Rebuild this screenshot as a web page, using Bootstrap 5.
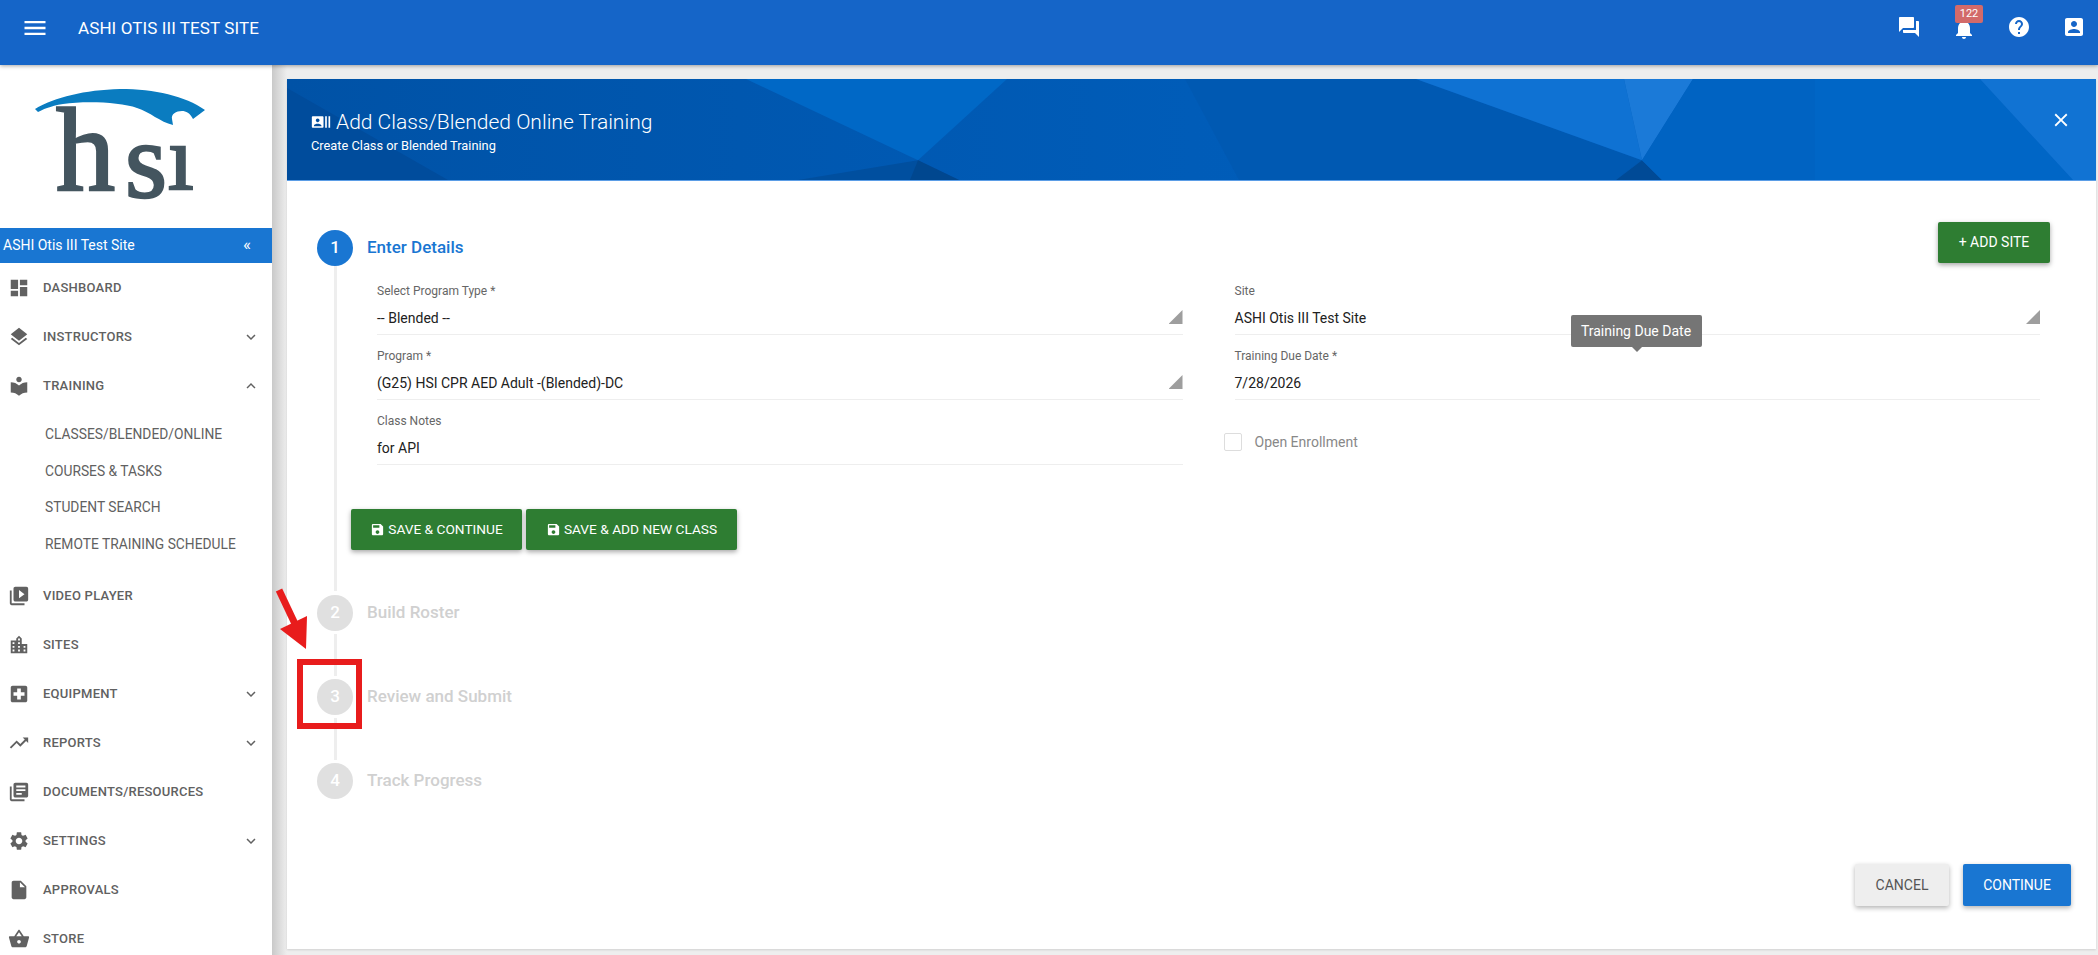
<!DOCTYPE html>
<html lang="en">
<head>
  <meta charset="UTF-8">
  <title>Add Class/Blended Online Training</title>
  <link rel="stylesheet" href="https://cdn.jsdelivr.net/npm/bootstrap@5.3.2/dist/css/bootstrap.min.css">
  <style>
    html, body { height: 955px; overflow: hidden; }
    body { font-family: Roboto, "Liberation Sans", sans-serif; background: #eee; color: #212121; }
    .ico { width: 24px; height: 24px; fill: currentColor; flex: none; }

    /* top bar */
    .top-bar { height: 65px; background: #1565c8; color: #fff; padding: 0 0 0 24px; box-shadow: 0 1px 4px rgba(0,0,0,.35); z-index: 5; position: relative; }
    .top-bar .menu-ico { width: 28px; height: 28px; margin-left: -3px; margin-top: -9px; }
    .top-title { font-size: 17px; letter-spacing: .1px; margin-left: 29px; margin-top: -8px; }
    .top-icons { margin-left: auto; padding-right: 12px; margin-top: -11px; gap: 31px; }
    .bell-wrap { position: relative; display: block; height: 24px; }
    .bell-wrap .ico { margin-top: 2px; }
    .bell-count { position: absolute; left: 3px; top: -10px; width: 28px; height: 18px; background: #d26a6a; border-radius: 2px; font-size: 11px; line-height: 18px; text-align: center; }

    .page-wrap { height: 890px; }

    /* sidebar */
    .side-bar { width: 272px; flex: none; background: #fff; overflow: hidden; position: relative; z-index: 2; }
    .side-logo { height: 163px; display: block; }
    .site-strip { height: 35px; background: #1976d2; color: #fff; font-size: 14px; padding: 0 21px 0 3px; }
    .site-strip .fold-mark { font-size: 17px; line-height: 1; margin-top: -3px; }
    .side-item { height: 49px; padding: 0 12px 0 8px; color: #616161; font-size: 13px; font-weight: 500; letter-spacing: .25px; text-decoration: none; }
    .side-item .ico { width: 22px; height: 22px; margin-right: 13px; }
    .side-item .chev { width: 18px; height: 18px; margin: 0 0 0 auto; }
    .side-sub { padding: 6px 0 9px; }
    .side-sub a { display: block; height: 36.5px; line-height: 36.5px; padding-left: 45px; color: #616161; font-size: 13.8px; text-decoration: none; }

    /* panel */
    .main-area { flex: 1; min-width: 0; padding: 14px 2px 6px 0; background: #eee; position: relative; }
    .main-area::before { content: ""; position: absolute; left: 0; top: 0; bottom: 0; width: 15px; background: linear-gradient(to right, #c9c9c9, #eeeeee); }
    .form-panel { margin-left: 15px; height: 100%; background: #fff; position: relative; box-shadow: 0 1px 2px rgba(0,0,0,.12); }
    .panel-head { height: 102px; position: relative; background: #005ab8; color: #fff; border-bottom: 1px solid #5b9de6; overflow: hidden; flex: none; }
    .head-art { position: absolute; inset: 0; width: 100%; height: 100%; }
    .head-text { position: relative; padding: 31px 0 0 24px; }
    .head-title { font-size: 21px; font-weight: 300; line-height: 24px; }
    .head-title .ico { width: 20px; height: 20px; margin-right: 5px; vertical-align: -3px; }
    .head-sub { font-size: 12.8px; line-height: 16px; margin-top: 4px; }
    .head-close { position: absolute; right: 24px; top: 30px; width: 22px; height: 22px; }

    /* stepper */
    .step-area { padding: 49px 46px 0 30px; position: relative; }
    .step-num { width: 36px; height: 36px; border-radius: 50%; background: #e0e0e0; color: #fff; font-size: 17px; font-weight: 500; flex: none; }
    .step-name { font-size: 17px; font-weight: 500; color: #d0d0d0; margin-left: 14px; }
    .step-head { height: 36px; }
    .step-head.is-active .step-num { background: #1976d2; }
    .step-head.is-active .step-name { color: #1976d2; }
    .add-site { margin: -11px 0 0 auto; width: 112px; height: 41px; }
    .green-btn { background: #2e7d32; color: #fff; font-size: 14px; border: 0; border-radius: 2px; box-shadow: 0 2px 5px rgba(0,0,0,.35); padding: 0; }
    .green-btn:hover { background: #2e7d32; color: #fff; }
    .green-btn .ico { width: 15px; height: 15px; margin-right: 3px; vertical-align: -3px; }
    .step-body { margin-left: 16.5px; border-left: 3px solid #eee; padding: 17px 0 41px 14.5px; }
    .step-line { margin: 3px 0 3px 16.5px; width: 3px; height: 42px; background: #eee; }
    .step-gap { margin-top: 4px; }
    .form-cols { padding: 0 10px 0 26px; }
    .form-cols .row { --bs-gutter-x: 52px; }
    .fld { position: relative; margin-bottom: 13px; }
    .fld-label { font-size: 12px; line-height: 16px; color: #666; margin-bottom: 9px; display: block; }
    .fld-value { font-size: 14px; line-height: 20px; padding-bottom: 6px; border-bottom: 1px solid #eee; color: #212121; position: relative; }
    .fld-value.is-select::after { content: ""; position: absolute; right: 0; top: 2px; width: 14px; height: 14px; background: #9e9e9e; clip-path: polygon(100% 0, 100% 100%, 0 100%); }
    .due-tip { position: absolute; left: 336px; top: -33px; width: 131px; height: 32px; background: #757575; color: #fff; font-size: 14px; line-height: 32px; text-align: center; border-radius: 2px; z-index: 3; }
    .due-tip::after { content: ""; position: absolute; left: 61px; top: 32px; border: 5px solid transparent; border-top-color: #757575; border-bottom: 0; }
    .open-check { margin: 33px 0 0 -11px; height: 18px; }
    .open-check .form-check-input { width: 18px; height: 18px; margin: 0 13px 0 0; border: 1px solid #ddd; border-radius: 2px; }
    .open-check label { font-size: 14px; color: #888; }
    .save-row { margin-top: 31px; gap: 4px; }
    .save-row .green-btn { height: 41px; font-size: 13.7px; }

    .panel-foot { margin-top: auto; padding: 0 25px 43px 0; gap: 14px; }
    .foot-btn { height: 42px; font-size: 14px; border: 0; border-radius: 2px; box-shadow: 0 2px 5px rgba(0,0,0,.3); padding: 0; }
    .foot-cancel { width: 94px; background: #eee; color: #555; }
    .foot-go { width: 108px; background: #1976d2; color: #fff; }

    /* red annotation over the page */
    .mark-overlay { position: absolute; left: 0; top: 0; width: 2098px; height: 955px; pointer-events: none; z-index: 10; }
  </style>
</head>
<body>
<svg width="0" height="0" class="position-absolute">
  <defs>
    <linearGradient id="head-base" x1="0" x2="1" y1="0" y2="0">
      <stop offset="0" stop-color="#0052a6"/>
      <stop offset=".5" stop-color="#005cb8"/>
      <stop offset="1" stop-color="#0062c0"/>
    </linearGradient>
  </defs>
  <symbol id="i-menu" viewBox="0 0 24 24"><path d="M3 18h18v-2H3v2zm0-5h18v-2H3v2zm0-7v2h18V6H3z"/></symbol>
  <symbol id="i-forum" viewBox="0 0 24 24"><path d="M21 6h-2v9H6v2c0 .55.45 1 1 1h11l4 4V7c0-.55-.45-1-1-1zm-4 6V3c0-.55-.45-1-1-1H3c-.55 0-1 .45-1 1v14l4-4h10c.55 0 1-.45 1-1z"/></symbol>
  <symbol id="i-bell" viewBox="0 0 24 24"><path d="M12 22c1.1 0 2-.9 2-2h-4c0 1.1.89 2 2 2zm6-6v-5c0-3.07-1.64-5.64-4.5-6.32V4c0-.83-.67-1.5-1.5-1.5s-1.5.67-1.5 1.5v.68C7.63 5.36 6 7.92 6 11v5l-2 2v1h16v-1l-2-2z"/></symbol>
  <symbol id="i-help" viewBox="0 0 24 24"><path d="M12 2C6.48 2 2 6.48 2 12s4.48 10 10 10 10-4.48 10-10S17.52 2 12 2zm1 17h-2v-2h2v2zm2.07-7.75l-.9.92C13.45 12.9 13 13.5 13 15h-2v-.5c0-1.1.45-2.1 1.17-2.83l1.24-1.26c.37-.36.59-.86.59-1.41 0-1.1-.9-2-2-2s-2 .9-2 2H8c0-2.21 1.79-4 4-4s4 1.79 4 4c0 .88-.36 1.68-.93 2.25z"/></symbol>
  <symbol id="i-account" viewBox="0 0 24 24"><path d="M3 5v14c0 1.1.89 2 2 2h14c1.1 0 2-.9 2-2V5c0-1.1-.9-2-2-2H5c-1.11 0-2 .9-2 2zm12 4c0 1.66-1.34 3-3 3s-3-1.34-3-3 1.34-3 3-3 3 1.34 3 3zm-9 8c0-2 4-3.1 6-3.1s6 1.1 6 3.1v1H6v-1z"/></symbol>
  <symbol id="i-close" viewBox="0 0 24 24"><path d="M19 6.41L17.59 5 12 10.59 6.41 5 5 6.41 10.59 12 5 17.59 6.41 19 12 13.41 17.59 19 19 17.59 13.41 12z"/></symbol>
  <symbol id="i-dash" viewBox="0 0 24 24"><path d="M3 13h8V3H3v10zm0 8h8v-6H3v6zm10 0h8V11h-8v10zm0-18v6h8V3h-8z"/></symbol>
  <symbol id="i-layers" viewBox="0 0 24 24"><path d="M11.99 18.54l-7.37-5.73L3 14.07l9 7 9-7-1.63-1.27-7.38 5.74zM12 16l7.36-5.73L21 9l-9-7-9 7 1.63 1.27L12 16z"/></symbol>
  <symbol id="i-library" viewBox="0 0 24 24"><path d="M12 11.55C9.64 9.35 6.48 8 3 8v11c3.48 0 6.64 1.35 9 3.55 2.36-2.19 5.52-3.55 9-3.55V8c-3.48 0-6.64 1.35-9 3.55zM12 8c1.66 0 3-1.34 3-3s-1.34-3-3-3-3 1.34-3 3 1.34 3 3 3z"/></symbol>
  <symbol id="i-video" viewBox="0 0 24 24"><path d="M4 6H2v14c0 1.1.9 2 2 2h14v-2H4V6zm16-4H8c-1.1 0-2 .9-2 2v12c0 1.1.9 2 2 2h12c1.1 0 2-.9 2-2V4c0-1.1-.9-2-2-2zm-8 12.5v-9l6 4.5-6 4.5z"/></symbol>
  <symbol id="i-city" viewBox="0 0 24 24"><path d="M15 11V5l-3-3-3 3v2H3v14h18V11h-6zm-8 8H5v-2h2v2zm0-4H5v-2h2v2zm0-4H5V9h2v2zm6 8h-2v-2h2v2zm0-4h-2v-2h2v2zm0-4h-2V9h2v2zm0-4h-2V5h2v2zm6 12h-2v-2h2v2zm0-4h-2v-2h2v2z"/></symbol>
  <symbol id="i-hospital" viewBox="0 0 24 24"><path d="M19 3H5c-1.1 0-1.99.9-1.99 2L3 19c0 1.1.9 2 2 2h14c1.1 0 2-.9 2-2V5c0-1.1-.9-2-2-2zm-1 11h-4v4h-4v-4H6v-4h4V6h4v4h4v4z"/></symbol>
  <symbol id="i-trend" viewBox="0 0 24 24"><path d="M16 6l2.29 2.29-4.88 4.88-4-4L2 16.59 3.41 18l6-6 4 4 6.3-6.29L22 12V6z"/></symbol>
  <symbol id="i-books" viewBox="0 0 24 24"><path d="M4 6H2v14c0 1.1.9 2 2 2h14v-2H4V6zm16-4H8c-1.1 0-2 .9-2 2v12c0 1.1.9 2 2 2h12c1.1 0 2-.9 2-2V4c0-1.1-.9-2-2-2zm-1 9H9V9h10v2zm-4 4H9v-2h6v2zm4-8H9V5h10v2z"/></symbol>
  <symbol id="i-gear" viewBox="0 0 24 24"><path d="M19.14 12.94c.04-.3.06-.61.06-.94 0-.32-.02-.64-.07-.94l2.03-1.58c.18-.14.23-.41.12-.61l-1.92-3.32c-.12-.22-.37-.29-.59-.22l-2.39.96c-.5-.38-1.03-.7-1.62-.94l-.36-2.54c-.04-.24-.24-.41-.48-.41h-3.84c-.24 0-.43.17-.47.41l-.36 2.54c-.59.24-1.13.57-1.62.94l-2.39-.96c-.22-.08-.47 0-.59.22L2.74 8.87c-.12.21-.08.47.12.61l2.03 1.58c-.05.3-.09.63-.09.94s.02.64.07.94l-2.03 1.58c-.18.14-.23.41-.12.61l1.92 3.32c.12.22.37.29.59.22l2.39-.96c.5.38 1.03.7 1.62.94l.36 2.54c.05.24.24.41.48.41h3.84c.24 0 .44-.17.47-.41l.36-2.54c.59-.24 1.13-.56 1.62-.94l2.39.96c.22.08.47 0 .59-.22l1.92-3.32c.12-.22.07-.47-.12-.61l-2.01-1.58zM12 15.6c-1.98 0-3.6-1.62-3.6-3.6s1.62-3.6 3.6-3.6 3.6 1.62 3.6 3.6-1.62 3.6-3.6 3.6z"/></symbol>
  <symbol id="i-file" viewBox="0 0 24 24"><path d="M6 2c-1.1 0-1.99.9-1.99 2L4 20c0 1.1.89 2 1.99 2H18c1.1 0 2-.9 2-2V8l-6-6H6zm7 7V3.5L18.5 9H13z"/></symbol>
  <symbol id="i-basket" viewBox="0 0 24 24"><path d="M17.21 9l-4.38-6.56c-.19-.28-.51-.42-.83-.42-.32 0-.64.14-.83.43L6.79 9H2c-.55 0-1 .45-1 1 0 .09.01.18.04.27l2.54 9.27c.23.84 1 1.46 1.92 1.46h13c.92 0 1.69-.62 1.93-1.46l2.54-9.27L23 10c0-.55-.45-1-1-1h-4.79zM9 9l3-4.4L15 9H9zm3 8c-1.1 0-2-.9-2-2s.9-2 2-2 2 .9 2 2-.9 2-2 2z"/></symbol>
  <symbol id="i-more" viewBox="0 0 24 24"><path d="M16.59 8.59L12 13.17 7.41 8.59 6 10l6 6 6-6z"/></symbol>
  <symbol id="i-less" viewBox="0 0 24 24"><path d="M12 8l-6 6 1.41 1.41L12 10.83l4.59 4.58L18 14z"/></symbol>
  <symbol id="i-save" viewBox="0 0 24 24"><path d="M17 3H5c-1.11 0-2 .9-2 2v14c0 1.1.89 2 2 2h14c1.1 0 2-.9 2-2V7l-4-4zm-5 16c-1.66 0-3-1.34-3-3s1.34-3 3-3 3 1.34 3 3-1.34 3-3 3zm3-10H5V5h10v4z"/></symbol>
  <symbol id="i-actors" viewBox="0 0 24 24"><path d="M21 5v14h2V5h-2zm-4 14h2V5h-2v14zM14 5H2c-.55 0-1 .45-1 1v12c0 .55.45 1 1 1h12c.55 0 1-.45 1-1V6c0-.55-.45-1-1-1zM8 7.75c1.24 0 2.25 1.01 2.25 2.25S9.24 12.25 8 12.25 5.75 11.24 5.75 10 6.76 7.75 8 7.75zM12.5 17h-9v-.75c0-1.5 3-2.25 4.5-2.25s4.5.75 4.5 2.25V17z"/></symbol>
</svg>

<header class="top-bar d-flex align-items-center">
  <svg class="ico menu-ico"><use href="#i-menu"/></svg>
  <span class="top-title">ASHI OTIS III TEST SITE</span>
  <div class="top-icons d-flex align-items-center">
    <svg class="ico"><use href="#i-forum"/></svg>
    <span class="bell-wrap"><svg class="ico"><use href="#i-bell"/></svg><span class="bell-count">122</span></span>
    <svg class="ico"><use href="#i-help"/></svg>
    <svg class="ico"><use href="#i-account"/></svg>
  </div>
</header>

<div class="page-wrap d-flex">
  <!-- sidebar -->
  <aside class="side-bar">
    <svg class="side-logo" width="272" height="163" viewBox="0 65 272 163">
      <path fill="#0a7cc0" d="M35 109C55 97 85 90 120 89C155 89 185 96 205 110L193 119C190 113 186 111 182 111C176 111 171 114 172 119L173 125C160 122 150 112 137 108C120 102 85 101 63 104C50 106 42 110 38 112Z"/>
      <text font-family="Liberation Serif, serif" fill="#44555f" stroke="#44555f" stroke-width="2.4">
        <tspan x="56" y="190" font-size="118">h</tspan><tspan x="125" y="197" font-size="108">s</tspan><tspan x="168" y="189" font-size="92">ı</tspan>
      </text>
    </svg>
    <div class="site-strip d-flex align-items-center justify-content-between">
      <span>ASHI Otis III Test Site</span><span class="fold-mark">«</span>
    </div>
    <nav>
      <a class="side-item d-flex align-items-center" href="#"><svg class="ico"><use href="#i-dash"/></svg>DASHBOARD</a>
      <a class="side-item d-flex align-items-center" href="#"><svg class="ico"><use href="#i-layers"/></svg>INSTRUCTORS<svg class="ico chev"><use href="#i-more"/></svg></a>
      <a class="side-item d-flex align-items-center" href="#"><svg class="ico"><use href="#i-library"/></svg>TRAINING<svg class="ico chev"><use href="#i-less"/></svg></a>
      <div class="side-sub">
        <a href="#">CLASSES/BLENDED/ONLINE</a>
        <a href="#">COURSES &amp; TASKS</a>
        <a href="#">STUDENT SEARCH</a>
        <a href="#">REMOTE TRAINING SCHEDULE</a>
      </div>
      <a class="side-item d-flex align-items-center" href="#"><svg class="ico"><use href="#i-video"/></svg>VIDEO PLAYER</a>
      <a class="side-item d-flex align-items-center" href="#"><svg class="ico"><use href="#i-city"/></svg>SITES</a>
      <a class="side-item d-flex align-items-center" href="#"><svg class="ico"><use href="#i-hospital"/></svg>EQUIPMENT<svg class="ico chev"><use href="#i-more"/></svg></a>
      <a class="side-item d-flex align-items-center" href="#"><svg class="ico"><use href="#i-trend"/></svg>REPORTS<svg class="ico chev"><use href="#i-more"/></svg></a>
      <a class="side-item d-flex align-items-center" href="#"><svg class="ico"><use href="#i-books"/></svg>DOCUMENTS/RESOURCES</a>
      <a class="side-item d-flex align-items-center" href="#"><svg class="ico"><use href="#i-gear"/></svg>SETTINGS<svg class="ico chev"><use href="#i-more"/></svg></a>
      <a class="side-item d-flex align-items-center" href="#"><svg class="ico"><use href="#i-file"/></svg>APPROVALS</a>
      <a class="side-item d-flex align-items-center" href="#"><svg class="ico"><use href="#i-basket"/></svg>STORE</a>
    </nav>
  </aside>

  <main class="main-area">
    <div class="form-panel d-flex flex-column">
      <div class="panel-head">
        <svg class="head-art" viewBox="0 0 1809 102" preserveAspectRatio="none">
          <rect width="1809" height="102" fill="url(#head-base)"/>
          <polygon fill="#004c9c" points="0,9 161,102 0,102"/>
          <polygon fill="#0068c6" points="459,0 720,0 631,82"/>
          <polygon fill="#004f9f" points="511,102 631,82 672,102"/>
          <polygon fill="#00478f" points="623,102 631,82 672,102"/>
          <polygon fill="#0059b2" points="898,0 1129,0 1355,82 1329,102 952,102"/>
          <polygon fill="#0f72d3" points="1129,0 1337,0 1355,82"/>
          <polygon fill="#1b7ad8" points="1337,0 1406,0 1355,82"/>
          <polygon fill="#004a96" points="1329,102 1355,82 1375,102"/>
          <polygon fill="#0063c2" points="1406,0 1528,0 1528,102 1375,102 1355,82"/>
          <polygon fill="#0066c6" points="1528,0 1693,0 1786,102 1528,102"/>
          <polygon fill="#1173d3" points="1693,0 1809,0 1809,102 1786,102"/>
        </svg>
        <div class="head-text">
          <div class="head-title"><svg class="ico"><use href="#i-actors"/></svg>Add Class/Blended Online Training</div>
          <div class="head-sub">Create Class or Blended Training</div>
        </div>
        <svg class="ico head-close"><use href="#i-close"/></svg>
      </div>

      <div class="step-area">
        <div class="step-head is-active d-flex align-items-center">
          <span class="step-num d-flex align-items-center justify-content-center">1</span>
          <span class="step-name">Enter Details</span>
          <button class="btn green-btn add-site" type="button">+ ADD SITE</button>
        </div>
        <div class="step-body">
          <div class="form-cols">
            <div class="row">
              <div class="col-6">
                <div class="fld"><span class="fld-label">Select Program Type *</span><div class="fld-value is-select">-- Blended --</div></div>
                <div class="fld"><span class="fld-label">Program *</span><div class="fld-value is-select">(G25) HSI CPR AED Adult -(Blended)-DC</div></div>
                <div class="fld"><span class="fld-label">Class Notes</span><div class="fld-value">for API</div></div>
              </div>
              <div class="col-6">
                <div class="fld"><span class="fld-label">Site</span><div class="fld-value is-select">ASHI Otis III Test Site</div></div>
                <div class="fld">
                  <div class="due-tip">Training Due Date</div>
                  <span class="fld-label">Training Due Date *</span><div class="fld-value">7/28/2026</div>
                </div>
                <div class="open-check d-flex align-items-center">
                  <input class="form-check-input" type="checkbox" id="openEnroll">
                  <label for="openEnroll">Open Enrollment</label>
                </div>
              </div>
            </div>
          </div>
          <div class="save-row d-flex">
            <button class="btn green-btn" type="button" style="width:171px"><svg class="ico"><use href="#i-save"/></svg>SAVE &amp; CONTINUE</button>
            <button class="btn green-btn" type="button" style="width:211px"><svg class="ico"><use href="#i-save"/></svg>SAVE &amp; ADD NEW CLASS</button>
          </div>
        </div>
        <div class="step-gap"></div>
        <div class="step-head d-flex align-items-center"><span class="step-num d-flex align-items-center justify-content-center">2</span><span class="step-name">Build Roster</span></div>
        <div class="step-line"></div>
        <div class="step-head d-flex align-items-center"><span class="step-num d-flex align-items-center justify-content-center">3</span><span class="step-name">Review and Submit</span></div>
        <div class="step-line"></div>
        <div class="step-head d-flex align-items-center"><span class="step-num d-flex align-items-center justify-content-center">4</span><span class="step-name">Track Progress</span></div>
      </div>

      <div class="panel-foot d-flex justify-content-end">
        <button class="btn foot-btn foot-cancel" type="button">CANCEL</button>
        <button class="btn foot-btn foot-go" type="button">CONTINUE</button>
      </div>
    </div>
  </main>
</div>

<!-- red arrow and box drawn on top of the screenshot -->
<svg class="mark-overlay" viewBox="0 0 2098 955">
  <rect x="300" y="662" width="59" height="64" fill="none" stroke="#e81c1c" stroke-width="6"/>
  <line x1="279" y1="590" x2="296" y2="626" stroke="#e81c1c" stroke-width="7"/>
  <polygon fill="#e81c1c" points="306,649 280,629 307,616"/>
</svg>

<script src="https://cdn.jsdelivr.net/npm/bootstrap@5.3.2/dist/js/bootstrap.bundle.min.js"></script>
</body>
</html>
